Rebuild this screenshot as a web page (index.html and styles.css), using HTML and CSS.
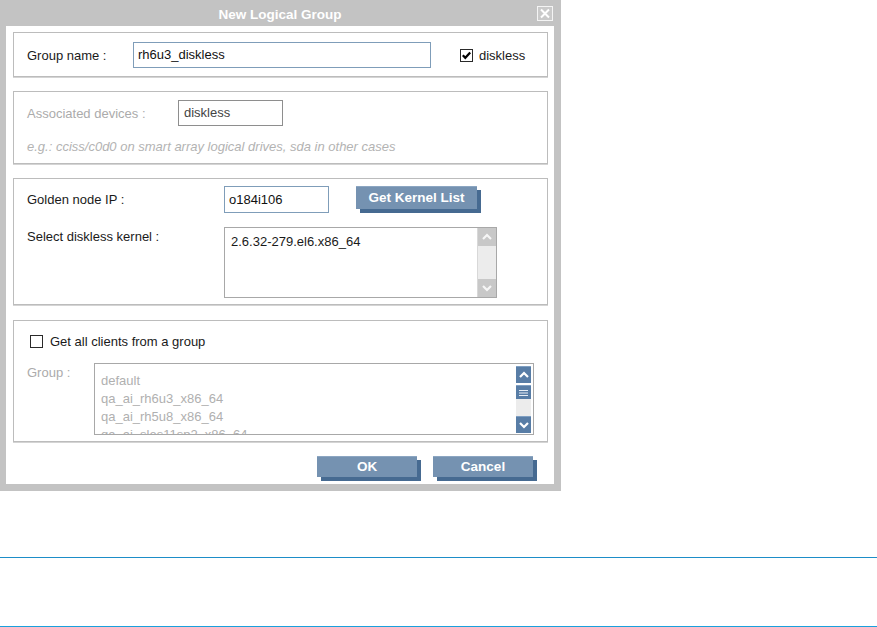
FILE: index.html
```html
<!DOCTYPE html>
<html lang="en">
<head>
  <meta charset="UTF-8" />
  <title>New Logical Group</title>
  <link rel="stylesheet" href="styles.css">
</head>
<body>
  <div class="dialog">
    <div class="titlebar">
      <span></span>
      <span class="title">New Logical Group</span>
      <span class="close">
        <svg width="14" height="13" viewBox="0 0 14 13"><path d="M3 2.5 L11 10.5 M11 2.5 L3 10.5" stroke="#fff" stroke-width="2"/></svg>
      </span>
    </div>

    <div class="panel">
      <!-- group name -->
      <div class="box box-name">
        <label class="lbl lbl-name">Group name :</label>
        <div class="field field-name">rh6u3_diskless</div>
        <span class="check checked">
          <svg width="11" height="11" viewBox="0 0 11 11"><path d="M1.8 5.2 L4.3 7.8 L9.2 2.4" fill="none" stroke="#000" stroke-width="2.2"/></svg>
        </span>
        <span class="check-text">diskless</span>
      </div>

      <!-- devices -->
      <div class="box box-devices">
        <div class="row">
          <label class="lbl lbl-dev muted">Associated devices :</label>
          <div class="field field-dev">diskless</div>
        </div>
        <div class="hint">e.g.: cciss/c0d0 on smart array logical drives, sda in other cases</div>
      </div>

      <!-- kernel -->
      <div class="box box-kernel">
        <div class="row">
          <label class="lbl lbl-kernel">Golden node IP :</label>
          <div class="field field-ip">o184i106</div>
          <span class="btn btn-kernel">Get Kernel List</span>
        </div>
        <div class="row row-top row-list">
          <label class="lbl lbl-kernel lbl-top">Select diskless kernel :</label>
          <div class="listbox list-kernel">
            <div class="items">
              <div class="item dark">2.6.32-279.el6.x86_64</div>
            </div>
            <div class="scroll scroll-off">
              <span class="sbtn"><svg width="12" height="8" viewBox="0 0 12 8"><path d="M2 6 L6 2 L10 6" fill="none" stroke="#f6f6f6" stroke-width="2.2"/></svg></span>
              <span class="track"></span>
              <span class="sbtn"><svg width="12" height="8" viewBox="0 0 12 8"><path d="M2 2 L6 6 L10 2" fill="none" stroke="#f6f6f6" stroke-width="2.2"/></svg></span>
            </div>
          </div>
        </div>
      </div>

      <!-- clients -->
      <div class="box box-clients">
        <div class="row row-check">
          <span class="check"></span>
          <span class="check-text">Get all clients from a group</span>
        </div>
        <div class="row row-top row-list2">
          <label class="lbl lbl-group muted">Group :</label>
          <div class="listbox list-group">
            <div class="items">
              <div class="item">default</div>
              <div class="item">qa_ai_rh6u3_x86_64</div>
              <div class="item">qa_ai_rh5u8_x86_64</div>
              <div class="item">qa_ai_sles11sp2_x86_64</div>
            </div>
            <div class="scroll scroll-on">
              <span class="sbtn"><svg width="12" height="8" viewBox="0 0 12 8"><path d="M2 6 L6 2 L10 6" fill="none" stroke="#fff" stroke-width="2.2"/></svg></span>
              <span class="thumb">
                <svg width="9" height="8" viewBox="0 0 9 8"><path d="M0 1.5 H9 M0 4 H9 M0 6.5 H9" stroke="#e8eef5" stroke-width="1.2"/></svg>
              </span>
              <span class="track"></span>
              <span class="sbtn"><svg width="12" height="8" viewBox="0 0 12 8"><path d="M2 2 L6 6 L10 2" fill="none" stroke="#fff" stroke-width="2.2"/></svg></span>
            </div>
          </div>
        </div>
      </div>

      <div class="actions">
        <span class="btn btn-action">OK</span>
        <span class="btn btn-action">Cancel</span>
      </div>
    </div>
  </div>

  <hr class="rule rule-top">
  <hr class="rule rule-bottom">
</body>
</html>
```

FILE: styles.css
```css
body {
  margin: 0;
  background: #fff;
  font-family: 'Liberation Sans', Arial, sans-serif;
  font-size: 13px;
  color: #1a1a1a;
}
.dialog {
  width: 561px;
  box-sizing: border-box;
  padding: 0 7px 7px 6px;
  background: #c3c3c3;
}
.titlebar {
  height: 26px;
  display: grid;
  grid-template-columns: 1fr auto 1fr;
}
.title {
  color: #fff;
  font-weight: bold;
  font-size: 13.5px;
  line-height: 30px;
}
.close {
  justify-self: end;
  margin: 6px 1px 0 0;
  width: 16px;
  height: 15px;
  box-sizing: border-box;
  border: 1px solid #f4f4f4;
  background: #cacaca;
  display: flex;
  align-items: center;
  justify-content: center;
}
.panel {
  height: 458px;
  background: #fff;
  padding-top: 6px;
  box-sizing: border-box;
  display: flex;
  flex-direction: column;
}
.box {
  margin: 0 6px 0 7px;
  border: 1px solid #bcbcbc;
  box-shadow: 0 1px 0 #d4d4d4;
  padding-left: 13px;
}
.box + .box {
  margin-top: 14px;
}
.box-name {
  display: flex;
  align-items: center;
  padding-top: 9px;
  padding-bottom: 8px;
}
.box-devices {
  padding-top: 8px;
  padding-bottom: 9px;
}
.box-kernel {
  padding-top: 7px;
  padding-bottom: 6px;
}
.box-clients {
  margin-top: 15px !important;
  padding-top: 13px;
  padding-bottom: 6px;
}
.row {
  display: flex;
  align-items: center;
}
.row-top {
  align-items: flex-start;
}
.row-list {
  margin-top: 14px;
}
.row-check {
  height: 15px;
}
.row-list2 {
  margin-top: 14px;
}
.lbl {
  flex: none;
  line-height: 15px;
}
.lbl-name { width: 106px; }
.lbl-dev { width: 151px; }
.lbl-kernel { width: 197px; }
.lbl-group { width: 67px; padding-top: 2px; }
.lbl-top { padding-top: 2px; }
.muted { color: #ababab; }

.field {
  box-sizing: border-box;
  height: 26px;
  border: 1px solid #7f9db9;
  padding-left: 4px;
  line-height: 24px;
  color: #111;
}
.field-name { width: 298px; }
.field-dev {
  width: 105px;
  border-color: #8e8e8e;
  padding-left: 5px;
  color: #444;
}
.field-ip {
  width: 105px;
  height: 27px;
  line-height: 25px;
}
.hint {
  margin-top: 14px;
  line-height: 14px;
  font-style: italic;
  color: #b3b3b3;
}

.check {
  width: 13px;
  height: 13px;
  box-sizing: border-box;
  border: 1px solid #2a2a2a;
  background: #fff;
  display: flex;
  align-items: center;
  justify-content: center;
  flex: none;
}
.box-name .check { margin-left: 29px; }
.check-text { margin-left: 6px; }
.row-check { margin-left: 3px; }
.row-check .check-text { margin-left: 7px; }

.btn {
  box-sizing: border-box;
  background: #7592b1;
  border-top: 1px solid #8ca6c2;
  color: #fff;
  font-weight: bold;
  text-align: center;
  box-shadow: 4px 4px 0 #466a91;
}
.btn-kernel {
  margin: 0 0 4px 27px;
  width: 121px;
  height: 23px;
  line-height: 21px;
  font-size: 13.5px;
}
.actions {
  margin-top: 14px;
  display: flex;
  justify-content: flex-end;
  gap: 16px;
  padding-right: 21px;
}
.btn-action {
  width: 100px;
  height: 21px;
  line-height: 19px;
  font-size: 13.5px;
}

.listbox {
  box-sizing: border-box;
  border: 1px solid #a8a8a8;
  display: flex;
  overflow: hidden;
}
.list-kernel {
  width: 273px;
  height: 71px;
}
.list-group {
  width: 440px;
  height: 72px;
}
.items {
  flex: 1;
  padding: 6px 6px 0;
  overflow: hidden;
}
.list-group .items {
  padding-top: 8px;
}
.item {
  line-height: 18px;
  white-space: nowrap;
  color: #b0b0b0;
}
.item.dark { color: #1a1a1a; line-height: 15px; }

.scroll {
  flex: none;
  display: flex;
  flex-direction: column;
}
.sbtn {
  display: flex;
  align-items: center;
  justify-content: center;
  flex: none;
}
.track { flex: 1; }
.scroll-off {
  width: 18px;
  border-left: 1px solid #d8d8d8;
  background: #ececec;
}
.scroll-off .sbtn {
  height: 18px;
  background: #c8c8c8;
}
.scroll-on {
  width: 19px;
  padding: 2px 2px 1px 2px;
  box-sizing: border-box;
}
.scroll-on .sbtn {
  height: 17px;
  background: #587da6;
  border-top: 1px solid #7f9fc2;
  box-sizing: border-box;
}
.scroll-on .thumb {
  margin-top: 2px;
  height: 14px;
  background: #587da6;
  border-top: 1px solid #7f9fc2;
  box-sizing: border-box;
  display: flex;
  align-items: center;
  justify-content: center;
}
.scroll-on .track {
  background: #ececec;
}

.rule {
  border: 0;
  height: 1px;
  margin: 0;
}
.rule-top {
  margin-top: 66px;
  background: #1d8dc8;
}
.rule-bottom {
  margin-top: 68px;
  background: #1aa0dc;
}
```
